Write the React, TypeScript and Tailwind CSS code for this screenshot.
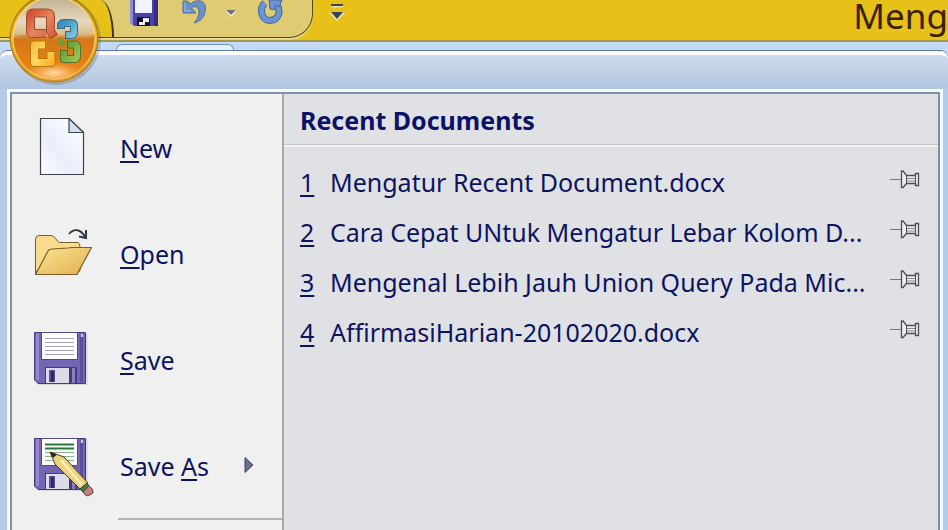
import type { ReactNode } from 'react';

/* ─── Icons ─── */
const OfficeLogo = () => (
  <svg width="108" height="90" viewBox="0 0 108 90" className="block">
    <defs>
      <linearGradient id="orbTop" x1="0" y1="0" x2="0" y2="1">
        <stop offset="0" stopColor="#bfae90" />
        <stop offset="0.3" stopColor="#e6d9bf" />
        <stop offset="0.45" stopColor="#dcbb8a" />
        <stop offset="0.52" stopColor="#cf7a20" />
        <stop offset="0.78" stopColor="#ee861a" />
        <stop offset="1" stopColor="#f9a83c" />
      </linearGradient>
      <linearGradient id="orbRing" x1="0" y1="0" x2="0" y2="1">
        <stop offset="0" stopColor="#a8871e" />
        <stop offset="0.5" stopColor="#f0b52a" />
        <stop offset="1" stopColor="#c98210" />
      </linearGradient>
      <radialGradient id="orbGlow">
        <stop offset="0" stopColor="#ffe0b0" />
        <stop offset="1" stopColor="#ffb254" stopOpacity="0" />
      </radialGradient>
      <linearGradient id="red" x1="0" y1="0" x2="1" y2="1">
        <stop offset="0" stopColor="#cf5334" />
        <stop offset="0.5" stopColor="#e58562" />
        <stop offset="1" stopColor="#d2603a" />
      </linearGradient>
      <linearGradient id="blue" x1="0" y1="0" x2="1" y2="1">
        <stop offset="0" stopColor="#3b8cb8" />
        <stop offset="1" stopColor="#7cc3dc" />
      </linearGradient>
      <linearGradient id="yellow" x1="0" y1="0" x2="1" y2="1">
        <stop offset="0" stopColor="#f6c445" />
        <stop offset="0.5" stopColor="#fdd860" />
        <stop offset="1" stopColor="#fbb42a" />
      </linearGradient>
      <linearGradient id="green" x1="0" y1="0" x2="1" y2="1">
        <stop offset="0" stopColor="#5f9a3a" />
        <stop offset="1" stopColor="#9cc455" />
      </linearGradient>
    </defs>
    <circle cx="56" cy="40" r="45" fill="#5a5a50" opacity="0.3" />
    <circle cx="54" cy="38" r="44" fill="url(#orbRing)" stroke="#a3741a" strokeWidth="1" />
    <circle cx="54" cy="38" r="41" fill="url(#orbTop)" stroke="#fbd768" strokeWidth="1.5" />
    <path d="M13 38 C26 31 38 36 54 36 S84 42 95 34 C96 62 76 79 54 79 S13 62 13 38Z" fill="#d9760f" opacity="0.45" />
    <ellipse cx="54" cy="73" rx="28" ry="11" fill="url(#orbGlow)" />
    <g fill="none" strokeLinejoin="round">
      <path d="M46 33.500H32Q30.500 33.500 30.500 32V16Q30.500 13 33 13H47Q50.500 13 50.500 16V31L54 37" stroke="#a64a2e" strokeWidth="9" />
      <path d="M46 33.500H32Q30.500 33.500 30.500 32V16Q30.500 13 33 13H47Q50.500 13 50.500 16V31L53 36" stroke="url(#red)" strokeWidth="7" />
      <path d="M61 29V25Q61 23 63.500 23H71Q74 23 74 26V32Q74 35 71 35H65" stroke="#2a6f96" strokeWidth="8" />
      <path d="M61 28V25Q61 23 63.500 23H71Q74 23 74 26V32Q74 35 71 35H66" stroke="url(#blue)" strokeWidth="6" />
      <path d="M46 45H34.500V62.500H51V51" stroke="#b9790f" strokeWidth="9" />
      <path d="M45 45H34.500V62.500H51V52" stroke="url(#yellow)" strokeWidth="7" />
      <path d="M67 44.500H75Q77 44.500 77 47V56Q77 59 74 59H64V50" stroke="#47762a" strokeWidth="8" />
      <path d="M68 44.500H75Q77 44.500 77 47V56Q77 59 74 59H64V51" stroke="url(#green)" strokeWidth="6" />
    </g>
    <path d="M57 42l4-4 5 5-4 4z" fill="#6f9a35" />
  </svg>
);

const MiniSaveIcon = () => (
  <svg width="28" height="27" viewBox="0 0 28 27">
    <path d="M0 0H28V26H4L0 22Z" fill="#4a43a8" />
    <path d="M0 0H3V24L0 22Z" fill="#8f8bdb" />
    <path d="M24 0H28V26H24Z" fill="#322c84" />
    <path d="M5 0H22V13H5Z" fill="#f2f5ff" />
    <path d="M7 17H20V26H7Z" fill="#15152c" />
    <path d="M13 18H19V22H15V25H9V22H13Z" fill="#eceefa" />
  </svg>
);

const UndoIcon = () => (
  <svg width="26" height="25" viewBox="0 0 26 25">
    <path d="M9 4C13 -1 24 -1 23.500 9C23 17 19 21 12 23C16 18 18 14 16.500 9C15 6 11 6 9.500 8L14 13H1V1H5Z" fill="#6b90c6" stroke="#4a70a8" strokeLinejoin="round" />
    <path d="M3 3V11H9" fill="none" stroke="#92b2de" strokeWidth="1.500" />
  </svg>
);

const RedoIcon = () => (
  <svg width="26" height="26" viewBox="0 0 26 26">
    <path d="M7 3C1 8 3 20 12 20.500C21 20 23 11 19 5" fill="none" stroke="#3f68a6" strokeWidth="7" />
    <path d="M7 3C1 8 3 20 12 20.500C21 20 23 11 19 5" fill="none" stroke="#6c95d0" strokeWidth="5" />
    <path d="M11 0H24L21 7L18 5L16 10L12 9Z" fill="#6c95d0" stroke="#3f68a6" />
  </svg>
);

const NewIcon = () => (
  <svg width="60" height="64" viewBox="0 0 60 64">
    <defs>
      <linearGradient id="paper" x1="1" y1="0" x2="0" y2="1">
        <stop offset="0" stopColor="#ffffff" />
        <stop offset="0.6" stopColor="#e9eefa" />
        <stop offset="1" stopColor="#fafcff" />
      </linearGradient>
    </defs>
    <path d="M8.500 3.500H37L51.500 17.500V59.500H8.500Z" fill="url(#paper)" stroke="#3c4247" strokeWidth="1.200" />
    <path d="M37 3.500V17.500H51.500Z" fill="#d5dfef" stroke="#3c4247" strokeWidth="1.200" strokeLinejoin="round" />
  </svg>
);

const OpenIcon = () => (
  <svg width="60" height="64" viewBox="0 0 60 64">
    <defs>
      <linearGradient id="folder" x1="0" y1="0" x2="1" y2="1">
        <stop offset="0" stopColor="#fbe497" />
        <stop offset="1" stopColor="#e0b04c" />
      </linearGradient>
    </defs>
    <path d="M3.500 53V18Q4 14.500 7 14.500H19Q22 14.500 24 18L27 21.500H46Q48 22 48 26V50H4Z" fill="#f8dc8c" stroke="#7a5e2c" strokeLinejoin="round" />
    <path d="M3.500 53.500L16 30Q17 28 20 28L36 27L40 26.500H59.500L45 53.500Z" fill="url(#folder)" stroke="#7a5e2c" strokeWidth="1.200" strokeLinejoin="round" />
    <path d="M37 13C42 7 49 8 53 16" fill="none" stroke="#333945" strokeWidth="1.800" />
    <path d="M47 15.500L54 17V9" fill="none" stroke="#333945" strokeWidth="2" />
  </svg>
);

const Disk = ({ lines }: { lines: string }) => (
  <>
    <path d="M4 6H55.500V58H6.500L4 54.500Z" fill="#b9b9c6" opacity="0.5" />
    <path d="M2.500 5.500H53.500V56.500H6L2.500 53Z" fill="#7465b4" stroke="#45397e" />
    <path d="M4 6H7V53H4Z" fill="#9488cb" />
    <path d="M48 10H51V55H48Z" fill="#5b4c9c" />
    <path d="M49 7H51V10H49Z" fill="#c9c2ea" />
    <path d="M9.500 5.500H45.500V32.500H9.500Z" fill="#fdfdff" stroke="#54488f" />
    <path d="M13 11.500H42M13 15.500H42M13 19.500H42M13 23.500H42M13 27.500H42" stroke={lines} />
    <path d="M13 40H45V56H13Z" fill="#46397f" />
    <path d="M14 41H37V56H14Z" fill="#dcdce6" />
    <path d="M17 43H23V55H17Z" fill="#5b4e9c" />
    <path d="M19 44H22V55H19Z" fill="#30285f" />
    <path d="M40 41H43V56H40Z" fill="#8a80be" />
  </>
);

const SaveIcon = () => (
  <svg width="60" height="64" viewBox="0 0 60 64">
    <Disk lines="#a5a5ad" />
  </svg>
);

const SaveAsIcon = () => (
  <svg width="64" height="64" viewBox="0 0 64 64">
    <Disk lines="#8cb691" />
    <path d="M13 11.500H42M13 15.500H42" stroke="#287a34" strokeWidth="1.800" />
    <path d="M18 19L32 24L56 50L48 56L23 31Z" fill="#ecd27c" stroke="#4c3d22" strokeLinejoin="round" />
    <path d="M29 27L50 52" stroke="#fbf0b8" strokeWidth="2.500" />
    <path d="M18 19L25 21.500L21 25Z" fill="#2c2619" />
    <path d="M48 56L55 50L57 53L51 59Z" fill="#3e7c46" stroke="#2b4f2e" />
    <path d="M51 59L57 53Q62 56 61 60L56 63Q52 62 51 59Z" fill="#c08080" stroke="#6b3c3c" />
  </svg>
);

const PinIcon = () => (
  <svg width="32" height="20" viewBox="0 0 32 20" fill="none" stroke="#4c4e54">
    <path d="M0 10.500H11" stroke="#77797f" />
    <path d="M11.500 2V18.500H13L16.500 14.500H25.500V16.500H28.500V4.500H25.500V6.500H16.500L13 2Z" fill="#eceef1" strokeWidth="1.300" />
    <path d="M16.500 6.500V14.500M25.500 6.500V14.500" />
    <path d="M17 9.500H25M17 12H25" stroke="#85878d" />
  </svg>
);

interface MenuEntry {
  id: string;
  label: ReactNode;
  icon: ReactNode;
  submenu?: boolean;
}

const Key = ({ children }: { children: ReactNode }) => (
  <span className="underline decoration-2 underline-offset-3 [text-decoration-skip-ink:none]">{children}</span>
);

const entries: MenuEntry[] = [
  { id: 'new', label: <><Key>N</Key>ew</>, icon: <NewIcon /> },
  { id: 'open', label: <><Key>O</Key>pen</>, icon: <OpenIcon /> },
  { id: 'save', label: <><Key>S</Key>ave</>, icon: <SaveIcon /> },
  { id: 'save-as', label: <>Save <Key>A</Key>s</>, icon: <SaveAsIcon />, submenu: true },
];

const recent = [
  'Mengatur Recent Document.docx',
  'Cara Cepat UNtuk Mengatur Lebar Kolom D...',
  'Mengenal Lebih Jauh Union Query Pada Mic...',
  'AffirmasiHarian-20102020.docx',
];

/* ─── Title bar ─── */
const TitleBar = () => (
  <header className="flex h-[42px] items-start justify-between border-b-2 border-[#a39650] bg-[#e8c118]">
    <div className="flex h-full items-start">
      <div className="flex h-[38px] items-start rounded-br-[24px] border-r border-b border-[#54491f] bg-[#dfcb72] shadow-[0_2px_0_#e9d98c]">
        <div className="h-full w-[114px] rounded-tr-[14px_38px] border-r-2 border-[#3a3210] bg-[#e8c118]" />
        <button aria-label="Save" className="ml-4"><MiniSaveIcon /></button>
        <button aria-label="Undo" className="ml-6"><UndoIcon /></button>
        <button aria-label="Undo history" className="mt-2 ml-4">
          <svg width="14" height="10" viewBox="0 0 14 10">
            <path d="M1 2H13L7 9Z" fill="#fbf6dc" />
            <path d="M2 2H12L7 7Z" fill="#6d7480" />
          </svg>
        </button>
        <button aria-label="Redo" className="mr-7 ml-5"><RedoIcon /></button>
      </div>
      <button aria-label="Customize Quick Access Toolbar" className="mt-1 ml-4">
        <svg width="16" height="18" viewBox="0 0 16 18">
          <path d="M2 2H14M3 10H13L8 15Z" stroke="#e9dfa8" strokeWidth="3" fill="none" />
          <path d="M2 0H14V2H2Z" fill="#3c4358" />
          <path d="M2 8H14L8 15Z" fill="#3c4358" />
        </svg>
      </button>
    </div>
    <h1 className="text-[35px] leading-[32px] text-[#3b2008]">Meng</h1>
  </header>
);

export default function App() {
  return (
    <div className="relative flex h-screen flex-col overflow-hidden bg-[#c6dbf5] font-['Noto_Sans',sans-serif] text-[25px] text-[#0c1460]">
      <TitleBar />

      {/* Ribbon tab peeking out above the menu */}
      <div className="flex h-2 items-end bg-[#c3d9f5] pl-[116px]">
        <div className="h-[6px] w-[118px] rounded-t-md border border-b-0 border-[#6d8fbd] bg-[#e6effa]" />
      </div>

      <div className="flex min-h-0 flex-1 flex-col rounded-t-lg border-t border-[#5b7ba8] bg-[#b4cbe8]">
        <div className="h-[38px] rounded-t-lg border-t-4 border-white bg-linear-to-b from-[#cddcef] to-[#b2c5e0]" />
        <div className="mr-[5px] ml-[7px] flex min-h-0 flex-1 border-3 border-b-0 border-[#f7fafd]">
          <div className="flex min-w-0 flex-1 border-2 border-b-0 border-[#8391a8]">
            <nav className="w-[272px] shrink-0 border-r-2 border-[#a9abb0] bg-[#f0f0f0]">
              <ul>
                {entries.map((e) => (
                  <li key={e.id}>
                    <button className="flex h-[106px] w-full items-center pl-5 text-left">
                      <span className="flex w-[88px] shrink-0">{e.icon}</span>
                      <span className="flex-1 pt-1">{e.label}</span>
                      {e.submenu && (
                        <svg width="10" height="18" viewBox="0 0 10 18" className="mr-7">
                          <path d="M1 1.500L9 9L1 16.500Z" fill="#696f92" stroke="#3f4467" />
                        </svg>
                      )}
                    </button>
                  </li>
                ))}
              </ul>
              <div className="ml-[106px] border-t-2 border-[#b3b3b6]" />
            </nav>

            <main className="min-w-0 flex-1 bg-[#e0e1e5]">
              <h2 className="border-b border-[#c3c4c8] px-4 pt-2 pb-1.5 text-[25px] leading-[36px] font-bold text-[#0a1266] shadow-[0_2px_0_#f0f1f4]">
                Recent Documents
              </h2>
              <ol className="pt-[13px]">
                {recent.map((name, i) => (
                  <li key={name} className="flex h-[50px] items-center pr-4 pl-4">
                    <a href="#" className="flex min-w-0 flex-1">
                      <span className="w-[30px] shrink-0"><Key>{i + 1}</Key></span>
                      <span className="whitespace-nowrap">{name}</span>
                    </a>
                    <button aria-label={`Pin ${name}`} className="mb-2"><PinIcon /></button>
                  </li>
                ))}
              </ol>
            </main>
          </div>
        </div>
      </div>

      {/* Office button overlaps the title bar and the menu frame */}
      <button aria-label="Office Button" className="absolute top-0 left-0">
        <OfficeLogo />
      </button>
    </div>
  );
}
